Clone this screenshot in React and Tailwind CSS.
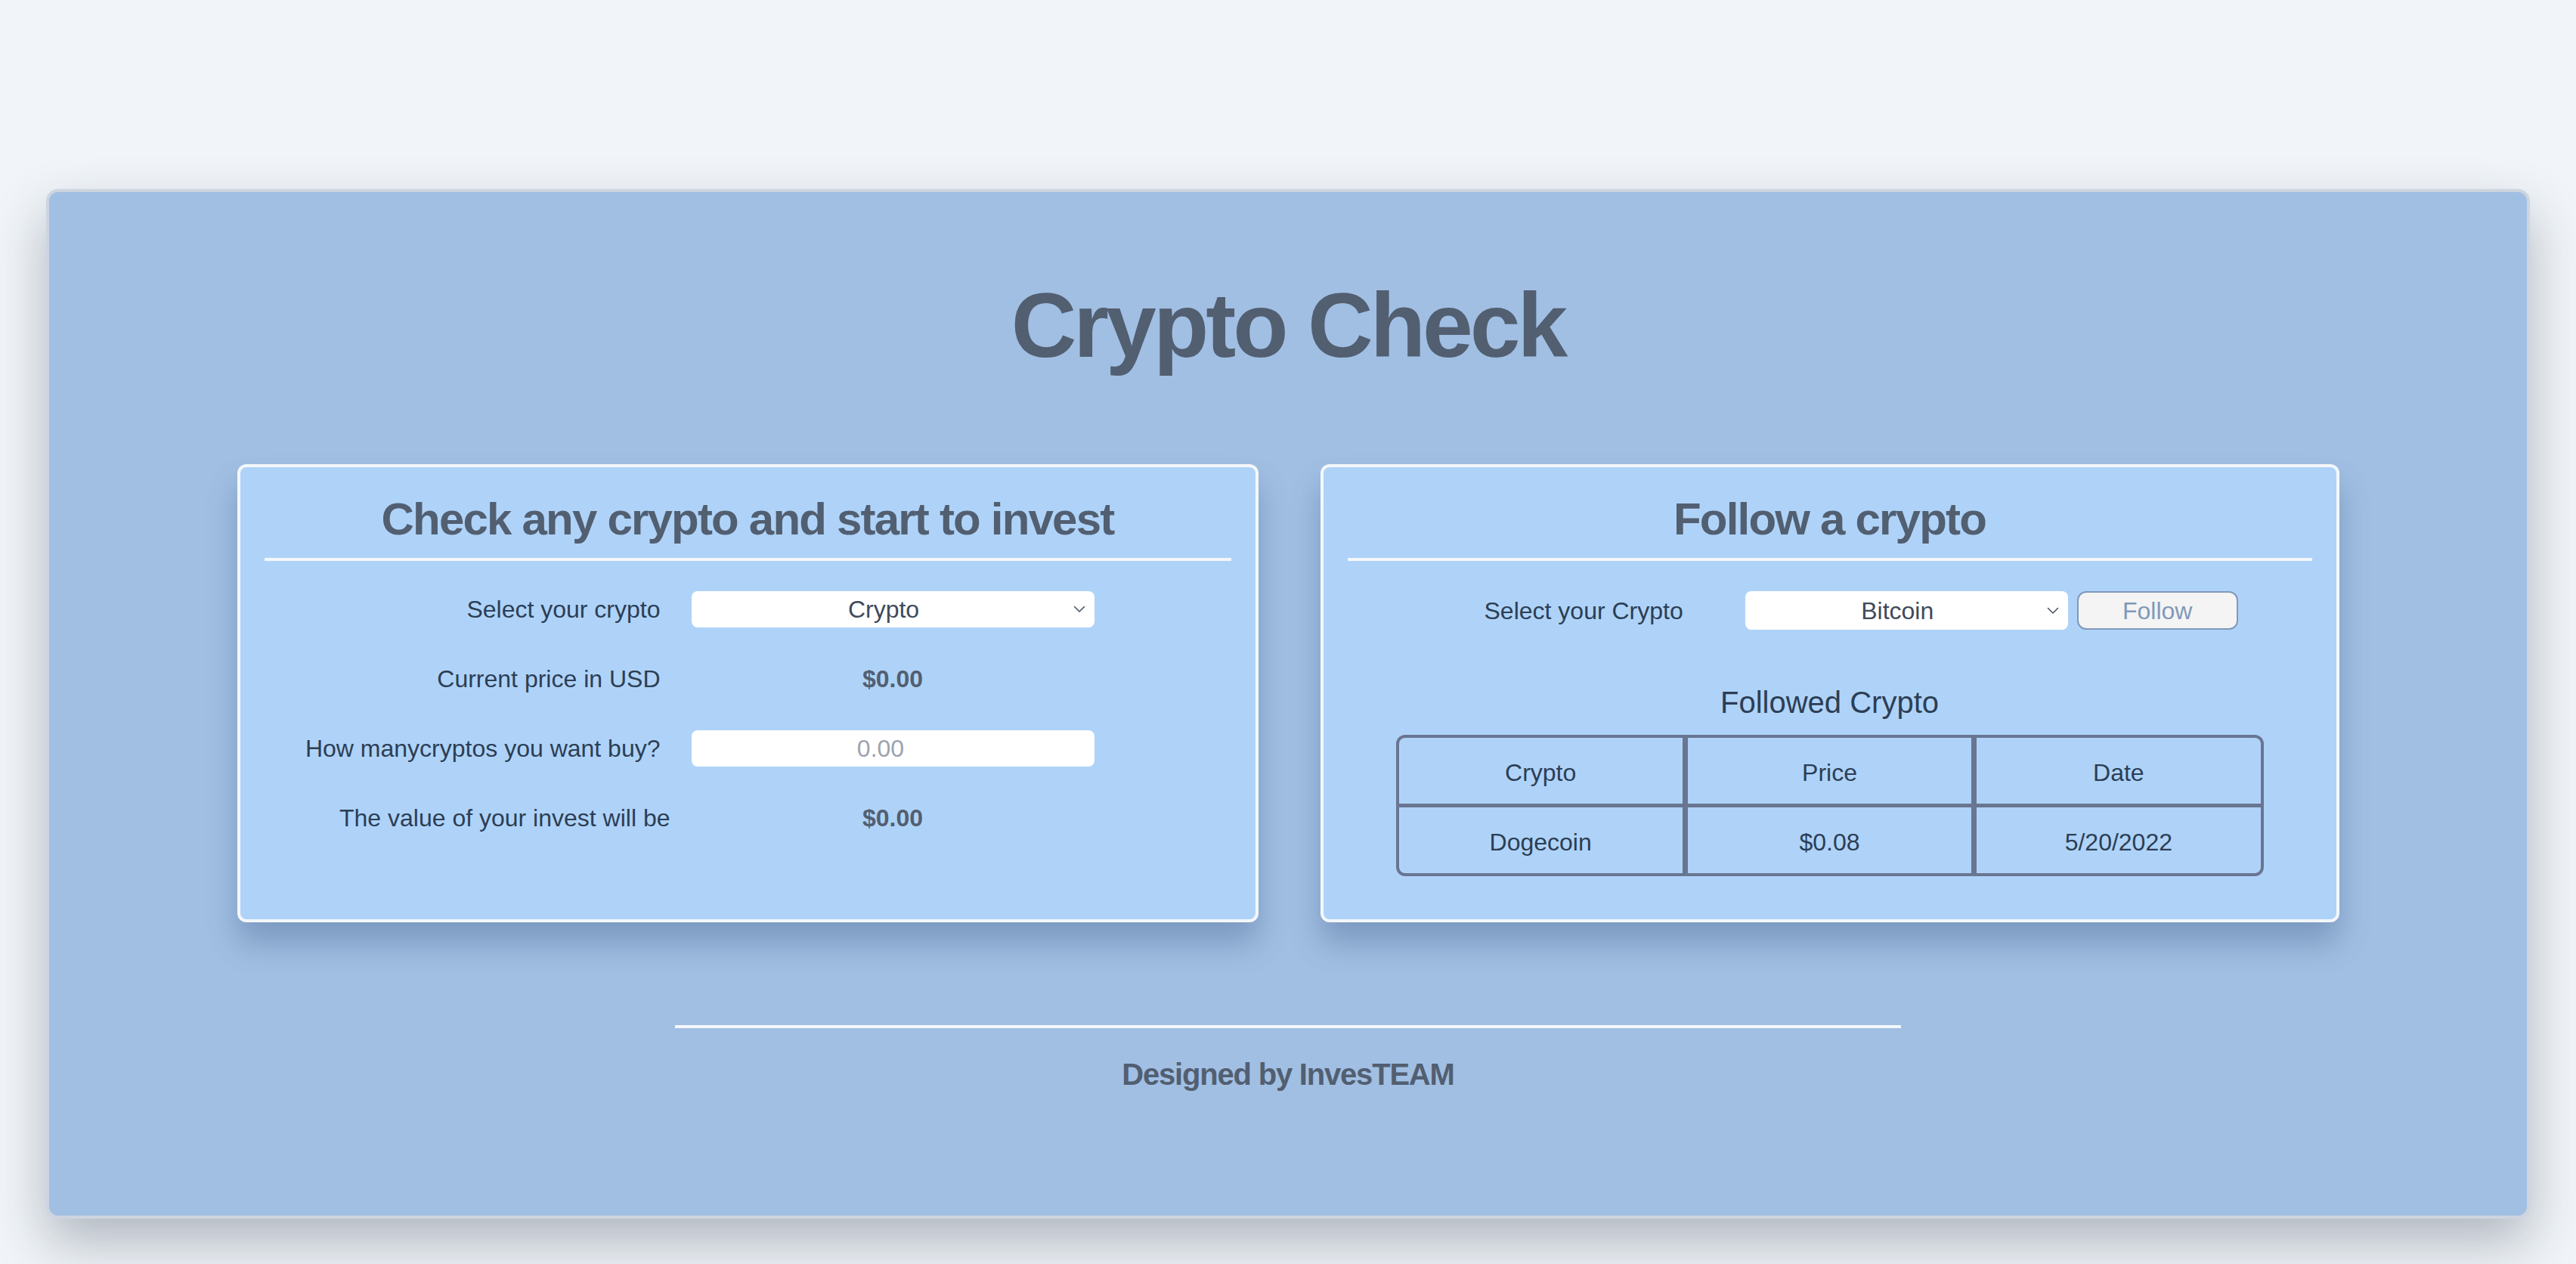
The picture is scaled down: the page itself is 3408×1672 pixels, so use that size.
import React from 'react';

const Chevron = () => (
  <svg className="absolute right-[12px] top-1/2 -translate-y-1/2 w-[16px] h-[10px]" viewBox="0 0 16 10" fill="none">
    <path d="M1.5 1.5 L8 8 L14.5 1.5" stroke="#4b5563" strokeWidth="1.6" strokeLinecap="round" strokeLinejoin="round" />
  </svg>
);

const FakeSelect = ({ value, className }) => (
  <div className={`relative bg-white rounded-[8px] flex items-center justify-center pr-[24px] text-[32px] text-[#3f4a5a] ${className}`}>
    {value}
    <Chevron />
  </div>
);

const App = () => {
  const rows = [
    { crypto: 'Dogecoin', price: '$0.08', date: '5/20/2022' }
  ];

  return (
    <div className="min-h-screen bg-[#f1f5f9] pt-[250px] pb-[60px] px-[61px] font-['Liberation_Sans',Arial,sans-serif]">
      <div className="h-[1362px] bg-[#a1bfe3] border-4 border-[#cdd5e0] rounded-[16px] shadow-[0_32px_70px_rgba(30,41,59,0.3)] pt-[116px] flex flex-col items-center">
        {/* Title */}
        <h1 className="text-[120px] leading-none font-bold tracking-[-0.033em] text-[#525f71]">
          Crypto Check
        </h1>

        {/* Cards */}
        <div className="mt-[124px] flex gap-[82px]">
          {/* Left card */}
          <div className="w-[1351px] h-[606px] bg-[#afd3f8] border-4 border-[#f4f7fb] rounded-[12px] shadow-[0_28px_40px_rgba(40,70,110,0.3)] px-[32px] pt-[39px]">
            <h2 className="text-[60px] leading-none font-bold tracking-[-0.03em] text-[#525f71] text-center">
              Check any crypto and start to invest
            </h2>
            <div className="mt-[21px] h-[4px] bg-[#f4f7fb]" />

            <div className="mt-[40px] flex flex-col gap-[44px] text-[32px] text-[#2c3e55]">
              <div className="flex items-center h-[48px]">
                <div className="w-[524px] text-right">Select your crypto</div>
                <FakeSelect value="Crypto" className="ml-[41px] w-[533px] h-[48px]" />
              </div>
              <div className="flex items-center h-[48px]">
                <div className="w-[524px] text-right">Current price in USD</div>
                <div className="ml-[41px] w-[533px] text-center font-bold text-[#525f71]">$0.00</div>
              </div>
              <div className="flex items-center h-[48px]">
                <div className="w-[524px] text-right">How manycryptos you want buy?</div>
                <input
                  type="text"
                  placeholder="0.00"
                  className="ml-[41px] w-[533px] h-[48px] bg-white rounded-[8px] text-center pr-[32px] text-[32px] placeholder:text-[#9ca3af] outline-none"
                />
              </div>
              <div className="flex items-center h-[48px]">
                <div className="w-[537px] text-right whitespace-nowrap">The value of your invest will be</div>
                <div className="ml-[28px] w-[533px] text-center font-bold text-[#525f71]">$0.00</div>
              </div>
            </div>
          </div>

          {/* Right card */}
          <div className="w-[1348px] h-[606px] bg-[#afd3f8] border-4 border-[#f4f7fb] rounded-[12px] shadow-[0_28px_40px_rgba(40,70,110,0.3)] px-[32px] pt-[39px]">
            <h2 className="text-[60px] leading-none font-bold tracking-[-0.03em] text-[#525f71] text-center">
              Follow a crypto
            </h2>
            <div className="mt-[21px] h-[4px] bg-[#f4f7fb]" />

            <div className="mt-[40px] flex items-center h-[51px] text-[32px] text-[#2c3e55]">
              <div className="w-[181px]" />
              <div className="whitespace-nowrap">Select your Crypto</div>
              <FakeSelect value="Bitcoin" className="ml-[82px] w-[427px] h-[51px]" />
              <button className="ml-[12px] w-[213px] h-[51px] bg-[#f4f4f4] border-2 border-[#8098b8] rounded-[12px] text-[32px] text-[#8199b9]">
                Follow
              </button>
            </div>

            <h3 className="mt-[76px] text-[40px] leading-none text-center text-[#2c3e55]">
              Followed Crypto
            </h3>

            <div className="mt-[23px] mx-auto w-[1148px] border-4 border-[#697691] rounded-[12px] overflow-hidden bg-[#697691] grid grid-cols-3 gap-x-[7px] gap-y-[5px] text-[32px] text-[#2c3e55]">
              {['Crypto', 'Price', 'Date'].map((h) => (
                <div key={h} className="h-[87px] pt-[4px] bg-[#afd3f8] flex items-center justify-center">
                  {h}
                </div>
              ))}
              {rows.map((r) => (
                <React.Fragment key={r.crypto}>
                  <div className="h-[87px] pt-[4px] bg-[#afd3f8] flex items-center justify-center">{r.crypto}</div>
                  <div className="h-[87px] pt-[4px] bg-[#afd3f8] flex items-center justify-center">{r.price}</div>
                  <div className="h-[87px] pt-[4px] bg-[#afd3f8] flex items-center justify-center">{r.date}</div>
                </React.Fragment>
              ))}
            </div>
          </div>
        </div>

        {/* Footer */}
        <div className="mt-[136px] w-[1622px] h-[4px] bg-[#f4f7fb]" />
        <p className="mt-[41px] text-[40px] leading-none font-bold tracking-[-0.03em] text-[#525f71]">
          Designed by InvesTEAM
        </p>
      </div>
    </div>
  );
};

export default App;
